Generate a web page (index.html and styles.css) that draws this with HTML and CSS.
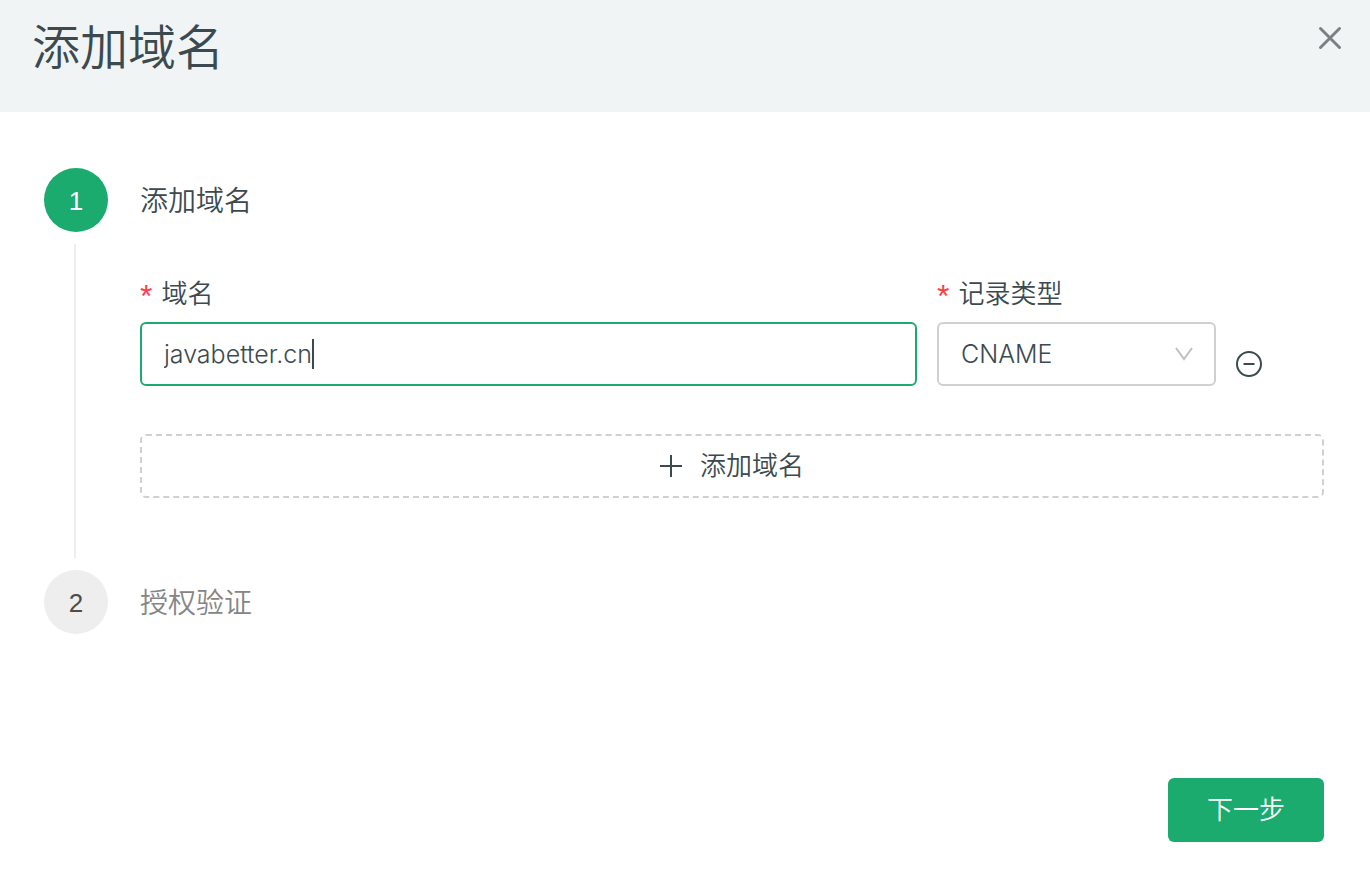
FILE: index.html
```html
<!DOCTYPE html>
<html lang="zh-CN">
<head>
    <meta charset="UTF-8">
    <meta name="viewport" content="width=device-width, initial-scale=1.0">
    <title>添加域名</title>
    <link rel="stylesheet" href="styles.css">
</head>
<body>
    <header class="header">
        <h1>添加域名</h1>
        <button type="button" class="icon-btn close" aria-label="关闭">
            <svg width="24" height="24" viewBox="0 0 24 24" fill="none" stroke="#7d8082" stroke-width="3" stroke-linecap="round">
                <path d="M2.500 2.500L21.500 21.500M21.500 2.500L2.500 21.500"/>
            </svg>
        </button>
    </header>
    <form class="content">
        <div class="step">
            <div class="rail">
                <span class="number active">1</span>
                <span class="line"></span>
            </div>
            <div class="step-body">
                <h2>添加域名</h2>
                <div class="row">
                    <div class="field">
                        <label for="domain">域名</label>
                        <div class="input-wrap">
                            <input type="text" id="domain" class="control focused" value="javabetter.cn" required>
                            <span class="caret"></span>
                        </div>
                    </div>
                    <div class="field">
                        <label for="type">记录类型</label>
                        <div class="input-wrap">
                            <select id="type" class="control" required>
                                <option>CNAME</option>
                            </select>
                            <svg class="arrow" width="18" height="14" viewBox="0 0 18 14" fill="none" stroke="#bfbfbf" stroke-width="2">
                                <path d="M1 1L9 12L17 1"/>
                            </svg>
                        </div>
                    </div>
                    <button type="button" class="icon-btn remove" aria-label="删除">
                        <svg width="26" height="26" viewBox="0 0 26 26" fill="none" stroke="#3c4a50" stroke-width="2">
                            <circle cx="13" cy="13" r="12"/>
                            <path d="M7.500 13H18.500"/>
                        </svg>
                    </button>
                </div>
                <button type="button" class="btn-add">
                    <svg width="22" height="22" viewBox="0 0 22 22" fill="none" stroke="#3c4a50" stroke-width="2">
                        <path d="M11 0V22M0 11H22"/>
                    </svg>
                    <span>添加域名</span>
                </button>
            </div>
        </div>
        <div class="step waiting">
            <div class="rail">
                <span class="number">2</span>
            </div>
            <div class="step-body">
                <h2>授权验证</h2>
            </div>
        </div>
        <div class="footer">
            <button type="submit" class="btn-next">下一步</button>
        </div>
    </form>
</body>
</html>
```
FILE: styles.css
```css
* {
    box-sizing: border-box;
}
body {
    margin: 0;
    min-height: 100vh;
    display: flex;
    flex-direction: column;
    background-color: #fff;
    color: #3c4a50;
    font-family: "Liberation Sans", "Noto Sans CJK SC", sans-serif;
    font-size: 26px;
    font-weight: 350;
    line-height: 40px;
}
button, input, select {
    font: inherit;
    color: inherit;
}
svg {
    display: block;
}
h1, h2 {
    margin: 0;
    font-weight: 350;
}
.header {
    display: flex;
    justify-content: space-between;
    align-items: flex-start;
    height: 112px;
    padding: 16px 28px 0 32px;
    background-color: #f0f4f5;
}
.header h1 {
    font-size: 48px;
    line-height: 66px;
}
.icon-btn {
    padding: 0;
    border: none;
    background: none;
    cursor: pointer;
}
.close {
    margin-top: 10px;
}
.content {
    flex: 1;
    display: flex;
    flex-direction: column;
    padding: 56px 46px 30px 44px;
}
.step {
    display: flex;
    gap: 32px;
}
.rail {
    display: flex;
    flex-direction: column;
    align-items: center;
    width: 64px;
}
.number {
    width: 64px;
    height: 64px;
    border-radius: 50%;
    background-color: #eee;
    color: #4c4c4c;
    line-height: 66px;
    text-align: center;
}
.number.active {
    background-color: #1bab6e;
    color: #fff;
}
.line {
    flex: 1;
    width: 2px;
    margin: 12px 2px 12px 0;
    background-color: #eee;
}
.step-body {
    flex: 1;
    min-width: 0;
    padding-bottom: 72px;
}
.step-body h2 {
    font-size: 28px;
    line-height: 68px;
}
.waiting h2 {
    color: #858585;
}
.waiting .step-body {
    padding-bottom: 0;
}
.row {
    display: grid;
    grid-template-columns: 1fr 279px 88px;
    column-gap: 20px;
    margin: 38px 0 48px;
}
.field label {
    display: flex;
    gap: 9px;
    margin-bottom: 8px;
}
.field label::before {
    content: "*";
    color: #ff3b45;
    font-size: 32px;
    line-height: 44px;
    height: 40px;
}
.input-wrap {
    position: relative;
}
.control {
    display: block;
    width: 100%;
    height: 64px;
    padding: 0 22px;
    border: 2px solid #d0d0d0;
    border-radius: 6px;
    background-color: #fff;
    outline: none;
    appearance: none;
    font-family: Inter, "Liberation Sans", sans-serif;
    font-size: 25px;
    font-weight: 300;
}
.focused {
    border-color: #1bab6e;
    caret-color: transparent;
}
.caret {
    position: absolute;
    top: 17px;
    left: 172px;
    width: 2px;
    height: 30px;
    background-color: #3c4a50;
}
.arrow {
    position: absolute;
    top: 25px;
    right: 23px;
    pointer-events: none;
}
.remove {
    align-self: end;
    justify-self: start;
    margin-bottom: 9px;
}
.btn-add {
    display: flex;
    justify-content: center;
    align-items: center;
    gap: 18px;
    width: 100%;
    height: 64px;
    border: 2px dashed #d0d0d0;
    border-radius: 6px;
    background-color: #fff;
    cursor: pointer;
}
.footer {
    display: flex;
    justify-content: flex-end;
    margin-top: auto;
}
.btn-next {
    height: 64px;
    padding: 0 39px;
    border: none;
    border-radius: 6px;
    background-color: #1bab6e;
    color: #fff;
    cursor: pointer;
}
```
